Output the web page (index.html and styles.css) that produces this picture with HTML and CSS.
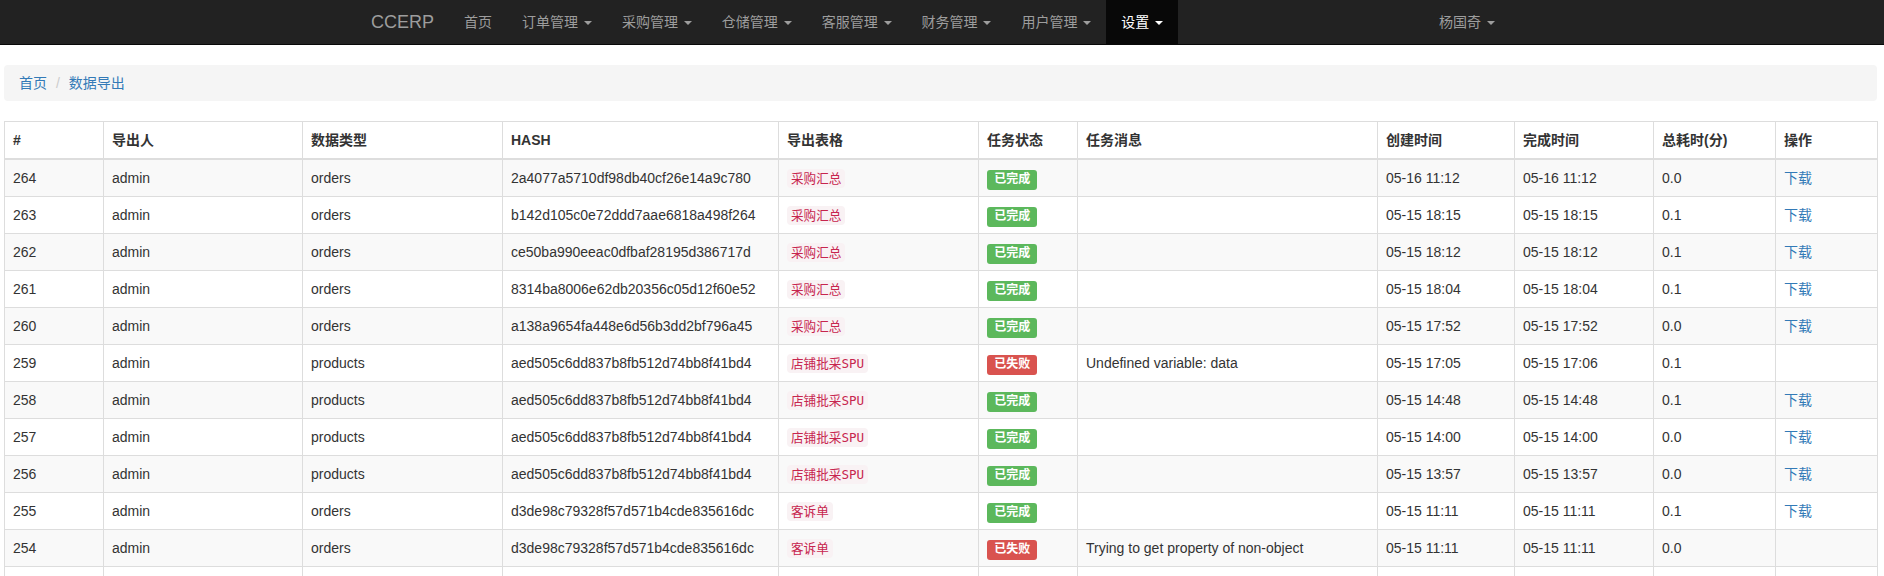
FILE: index.html
```html
<!DOCTYPE html>
<html lang="zh-CN">
<head>
<meta charset="utf-8">
<title>数据导出 - CCERP</title>
<link rel="stylesheet" href="styles.css">
</head>
<body>
<nav class="navbar">
  <div class="nav-inner">
    <a class="brand" href="#">CCERP</a>
    <ul class="nav">
      <li><a href="#">首页</a></li>
      <li><a href="#">订单管理 <span class="caret"></span></a></li>
      <li><a href="#">采购管理 <span class="caret"></span></a></li>
      <li><a href="#">仓储管理 <span class="caret"></span></a></li>
      <li><a href="#">客服管理 <span class="caret"></span></a></li>
      <li><a href="#">财务管理 <span class="caret"></span></a></li>
      <li><a href="#">用户管理 <span class="caret"></span></a></li>
      <li class="active"><a href="#">设置 <span class="caret"></span></a></li>
    </ul>
    <ul class="nav nav-right">
      <li><a href="#">杨国奇 <span class="caret"></span></a></li>
    </ul>
  </div>
</nav>
<main class="page">
  <ol class="breadcrumb">
    <li><a href="#">首页</a></li>
    <li class="sep">/&nbsp;</li>
    <li><a href="#">数据导出</a></li>
  </ol>
  <table class="table">
    <colgroup>
      <col class="c1"><col class="c2"><col class="c3"><col class="c4"><col class="c5"><col class="c6"><col class="c7"><col class="c8"><col class="c9"><col class="c10"><col class="c11">
    </colgroup>
    <thead>
      <tr><th>#</th><th>导出人</th><th>数据类型</th><th>HASH</th><th>导出表格</th><th>任务状态</th><th>任务消息</th><th>创建时间</th><th>完成时间</th><th>总耗时(分)</th><th>操作</th></tr>
    </thead>
    <tbody>
      <tr><td>264</td><td>admin</td><td>orders</td><td>2a4077a5710df98db40cf26e14a9c780</td><td><code>采购汇总</code></td><td><span class="label ok">已完成</span></td><td></td><td>05-16 11:12</td><td>05-16 11:12</td><td>0.0</td><td><a href="#">下载</a></td></tr>
      <tr><td>263</td><td>admin</td><td>orders</td><td>b142d105c0e72ddd7aae6818a498f264</td><td><code>采购汇总</code></td><td><span class="label ok">已完成</span></td><td></td><td>05-15 18:15</td><td>05-15 18:15</td><td>0.1</td><td><a href="#">下载</a></td></tr>
      <tr><td>262</td><td>admin</td><td>orders</td><td>ce50ba990eeac0dfbaf28195d386717d</td><td><code>采购汇总</code></td><td><span class="label ok">已完成</span></td><td></td><td>05-15 18:12</td><td>05-15 18:12</td><td>0.1</td><td><a href="#">下载</a></td></tr>
      <tr><td>261</td><td>admin</td><td>orders</td><td>8314ba8006e62db20356c05d12f60e52</td><td><code>采购汇总</code></td><td><span class="label ok">已完成</span></td><td></td><td>05-15 18:04</td><td>05-15 18:04</td><td>0.1</td><td><a href="#">下载</a></td></tr>
      <tr><td>260</td><td>admin</td><td>orders</td><td>a138a9654fa448e6d56b3dd2bf796a45</td><td><code>采购汇总</code></td><td><span class="label ok">已完成</span></td><td></td><td>05-15 17:52</td><td>05-15 17:52</td><td>0.0</td><td><a href="#">下载</a></td></tr>
      <tr><td>259</td><td>admin</td><td>products</td><td>aed505c6dd837b8fb512d74bb8f41bd4</td><td><code>店铺批采SPU</code></td><td><span class="label fail">已失败</span></td><td>Undefined variable: data</td><td>05-15 17:05</td><td>05-15 17:06</td><td>0.1</td><td></td></tr>
      <tr><td>258</td><td>admin</td><td>products</td><td>aed505c6dd837b8fb512d74bb8f41bd4</td><td><code>店铺批采SPU</code></td><td><span class="label ok">已完成</span></td><td></td><td>05-15 14:48</td><td>05-15 14:48</td><td>0.1</td><td><a href="#">下载</a></td></tr>
      <tr><td>257</td><td>admin</td><td>products</td><td>aed505c6dd837b8fb512d74bb8f41bd4</td><td><code>店铺批采SPU</code></td><td><span class="label ok">已完成</span></td><td></td><td>05-15 14:00</td><td>05-15 14:00</td><td>0.0</td><td><a href="#">下载</a></td></tr>
      <tr><td>256</td><td>admin</td><td>products</td><td>aed505c6dd837b8fb512d74bb8f41bd4</td><td><code>店铺批采SPU</code></td><td><span class="label ok">已完成</span></td><td></td><td>05-15 13:57</td><td>05-15 13:57</td><td>0.0</td><td><a href="#">下载</a></td></tr>
      <tr><td>255</td><td>admin</td><td>orders</td><td>d3de98c79328f57d571b4cde835616dc</td><td><code>客诉单</code></td><td><span class="label ok">已完成</span></td><td></td><td>05-15 11:11</td><td>05-15 11:11</td><td>0.1</td><td><a href="#">下载</a></td></tr>
      <tr><td>254</td><td>admin</td><td>orders</td><td>d3de98c79328f57d571b4cde835616dc</td><td><code>客诉单</code></td><td><span class="label fail">已失败</span></td><td>Trying to get property of non-object</td><td>05-15 11:11</td><td>05-15 11:11</td><td>0.0</td><td></td></tr>
      <tr class="cut"><td></td><td></td><td></td><td></td><td></td><td></td><td></td><td></td><td></td><td></td><td></td></tr>
    </tbody>
  </table>
</main>
</body>
</html>
```

FILE: styles.css
```css
* { box-sizing: border-box; }
html, body { margin: 0; padding: 0; }
body {
  font-family: "Liberation Sans", Arial, "Noto Sans CJK SC", sans-serif;
  font-size: 14px;
  line-height: 20px;
  color: #333;
  background: #fff;
  overflow: hidden;
}
a { color: #337ab7; text-decoration: none; }

.navbar {
  background: #222;
  border-bottom: 1px solid #080808;
  height: 45px;
  margin-bottom: 20px;
}
.nav-inner {
  width: 1170px;
  margin-left: calc(50% - 586px);
  display: flex;
  padding-right: 16px;
}
.brand {
  display: block;
  padding: 12px 15px;
  font-size: 18px;
  line-height: 20px;
  color: #9d9d9d;
}
.nav {
  list-style: none;
  margin: 0;
  padding: 0;
  display: flex;
}
.nav-right { margin-left: auto; }
.nav li a {
  display: block;
  padding: 12px 15px;
  color: #9d9d9d;
  line-height: 20px;
}
.nav li.active a {
  background: #080808;
  color: #fff;
}
.caret {
  display: inline-block;
  width: 0;
  height: 0;
  margin-left: 2px;
  vertical-align: middle;
  border-top: 4px solid;
  border-left: 4px solid transparent;
  border-right: 4px solid transparent;
}

.page {
  width: 1873px;
  margin-left: 4px;
}
.breadcrumb {
  list-style: none;
  margin: 0 0 20px;
  padding: 8px 15px;
  background: #f5f5f5;
  border-radius: 4px;
  display: flex;
}
.breadcrumb .sep {
  color: #ccc;
  padding: 0 5px 0 9px;
}

.table {
  width: 1873px;
  table-layout: fixed;
  border-collapse: collapse;
  border: 1px solid #ddd;
}
.c1 { width: 99px; }
.c2 { width: 199px; }
.c3 { width: 200px; }
.c4 { width: 276px; }
.c5 { width: 200px; }
.c6 { width: 99px; }
.c7 { width: 300px; }
.c8 { width: 137px; }
.c9 { width: 139px; }
.c10 { width: 122px; }
.c11 { width: 102px; }
.table th, .table td {
  border: 1px solid #ddd;
  padding: 8px;
  height: 37px;
  line-height: 20px;
  text-align: left;
  vertical-align: top;
  white-space: nowrap;
  overflow: hidden;
}
.table th {
  font-weight: bold;
  border-bottom: 2px solid #ddd;
  vertical-align: bottom;
}
.table tbody tr:nth-child(odd) { background: #f9f9f9; }

code {
  font-family: "DejaVu Sans Mono", "Noto Sans CJK SC", monospace;
  font-size: 90%;
  line-height: 1;
  padding: 2px 4px;
  color: #c7254e;
  background: #f9f2f4;
  border-radius: 4px;
}
.label {
  display: inline;
  padding: .2em .6em .3em;
  font-size: 12px;
  font-weight: bold;
  line-height: 1;
  color: #fff;
  text-align: center;
  white-space: nowrap;
  vertical-align: baseline;
  border-radius: .25em;
}
.label.ok { background: #5cb85c; }
.label.fail { background: #d9534f; }
```
